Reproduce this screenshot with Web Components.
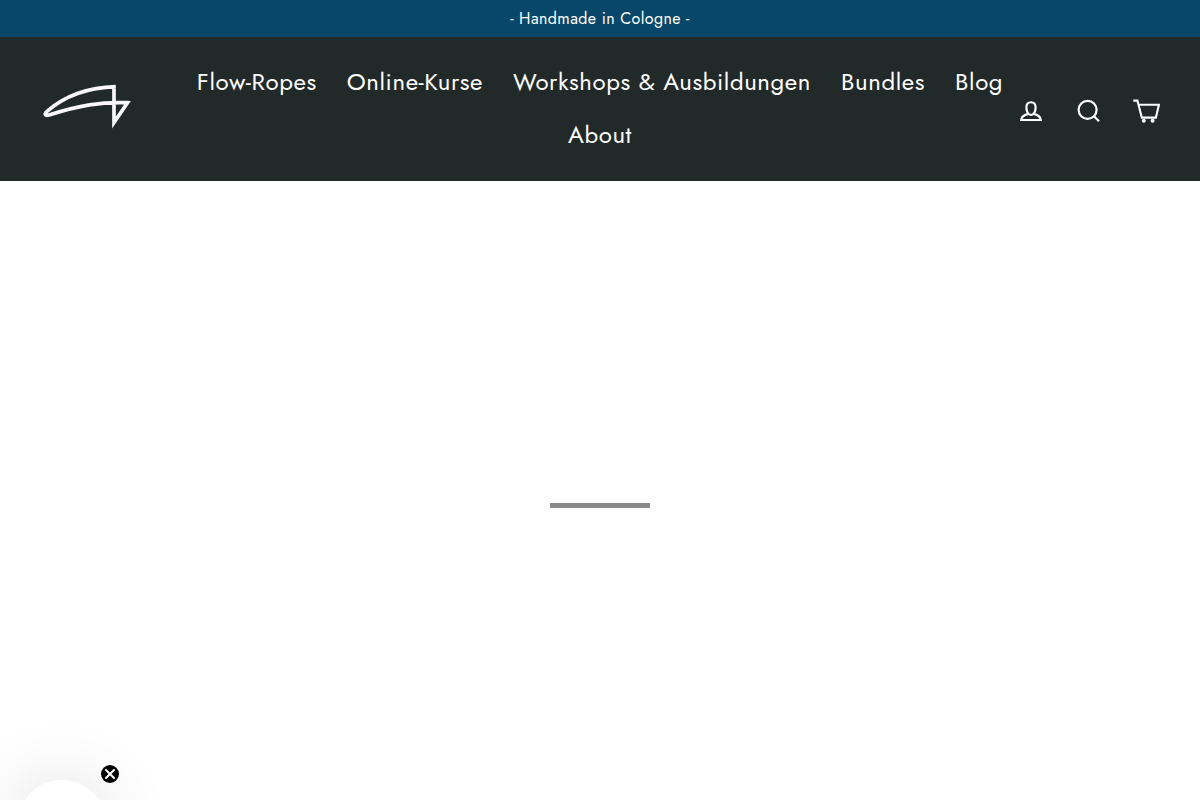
<!DOCTYPE html>
<html lang="de">
<head>
<meta charset="utf-8">
<meta name="viewport" content="width=device-width, initial-scale=1">
<title>Flow-Ropes</title>
<style>
  html, body { margin: 0; }
  body { background: #fff; font-family: Jost, Lato, sans-serif; color: #fff; --tracking: 0.025em; }
</style>
</head>
<body>
<shop-page>
  <announcement-bar slot="top">- Handmade in Cologne -</announcement-bar>
  <site-header slot="top">
    <nav-link href="#flow-ropes">Flow-Ropes</nav-link>
    <nav-link href="#online-kurse">Online-Kurse</nav-link>
    <nav-link href="#workshops">Workshops &amp; Ausbildungen</nav-link>
    <nav-link href="#bundles">Bundles</nav-link>
    <nav-link href="#blog">Blog</nav-link>
    <nav-link href="#about">About</nav-link>
  </site-header>
  <loading-bar></loading-bar>
</shop-page>
<promo-teaser></promo-teaser>

<script>
  const define = (name, html, setup) => {
    const template = document.createElement('template');
    template.innerHTML = html;
    customElements.define(name, class extends HTMLElement {
      constructor() {
        super();
        this.attachShadow({ mode: 'open' }).append(template.content.cloneNode(true));
      }
      connectedCallback() { if (setup) setup(this, this.shadowRoot); }
    });
  };

  define('shop-page', `
    <style>
      :host { display: flex; flex-direction: column; min-height: 100vh; }
      main { flex: 1; display: flex; align-items: center; justify-content: center; padding-top: 30px; }
    </style>
    <slot name="top"></slot>
    <main><slot></slot></main>`);

  define('announcement-bar', `
    <style>
      :host { display: block; background: #084769; text-align: center; }
      p { margin: 0; padding: 7px 40px 6px; font-size: 16px; line-height: 24px; letter-spacing: var(--tracking); }
    </style>
    <p><slot></slot></p>`);

  define('nav-link', `
    <style>
      :host { display: block; }
      a { display: block; padding: 0 15px; color: inherit; text-decoration: none;
          font-size: 24px; line-height: 53px; letter-spacing: var(--tracking); white-space: nowrap; }
    </style>
    <a><slot></slot></a>`,
    (host, root) => { root.querySelector('a').href = host.getAttribute('href'); });

  define('site-header', `
    <style>
      :host { display: block; background: #222a29; }
      header { display: grid; grid-template-columns: 144px 1fr 144px; align-items: center; padding: 18px 40px 20px; }
      .logo { display: block; width: 100px; height: 60px; }
      nav { display: flex; flex-wrap: wrap; justify-content: center; margin: 0 -8px; }
      .tools { display: flex; gap: 30px; justify-content: flex-end; padding-top: 6px; }
      .tools a { display: block; width: 28px; height: 28px; color: inherit; }
      svg { display: block; width: 100%; height: 100%; fill: none; stroke: currentColor; }
      .dot { fill: currentColor; stroke: none; }
    </style>
    <header>
      <a class="logo" href="#home" aria-label="Startseite">
        <svg viewBox="0 0 100 60" color="#f7f7fc" stroke-width="3.7" stroke-miterlimit="8">
          <path d="M74 8.600V44.500L87.500 24.700C61 23.700 39 27.500 9 37C5 38.200 4 36 7 33.300C24 18.500 45 9.500 75.800 8.600"/>
        </svg>
      </a>
      <nav aria-label="Hauptmenü"><slot></slot></nav>
      <div class="tools">
        <a href="#account" aria-label="Einloggen">
          <svg viewBox="0 0 28 28" stroke-width="2.100">
            <path d="M12.800 17.200C11.200 15.700 10.400 13.500 10.400 10.500C10.400 6.800 12.200 5.200 15 5.200S19.600 6.800 19.600 10.500C19.600 13.500 18.800 15.700 17.200 17.200"/>
            <path d="M12.600 16.900C8.500 17.800 5.500 19 5.200 23H24.800C24.500 19 21.500 17.800 17.400 16.900C16.200 18.200 13.800 18.200 12.600 16.900"/>
          </svg>
        </a>
        <a href="#search" aria-label="Suche">
          <svg viewBox="0 0 28 28" stroke-width="2.200">
            <circle cx="13.600" cy="12.800" r="9"/><path d="M20 19.200L25 24.200"/>
          </svg>
        </a>
        <a href="#cart" aria-label="Einkaufswagen">
          <svg viewBox="0 0 28 28" stroke-width="2.100" overflow="visible">
            <path d="M1.300 3.600H5.400L9.800 20.600H23.900L26.900 7.800H6.600"/>
            <circle class="dot" cx="11.800" cy="23.800" r="2"/><circle class="dot" cx="20.600" cy="23.800" r="2"/>
          </svg>
        </a>
      </div>
    </header>`);

  define('loading-bar', `
    <style>
      :host { display: block; width: 100px; height: 5px; background: #8b8989; }
    </style>`,
    host => { host.setAttribute('role', 'progressbar'); host.setAttribute('aria-label', 'Laden'); });

  define('promo-teaser', `
    <style>
      :host { display: block; position: fixed; left: 17px; bottom: -70px; width: 90px; height: 90px; }
      button { border: 0; margin: 0; padding: 0; border-radius: 50%; cursor: pointer; }
      .open { display: block; width: 100%; height: 100%; background: #fff; box-shadow: 0 0 70px rgba(0, 0, 0, .13); }
      .close { position: absolute; top: -15px; right: -12px; width: 18px; height: 18px; background: #000; color: #fff; }
      svg { display: block; fill: none; stroke: currentColor; }
    </style>
    <button class="open" type="button" aria-label="Angebot öffnen"></button>
    <button class="close" type="button" aria-label="Angebot schließen">
      <svg width="18" height="18" viewBox="0 0 18 18" stroke-width="2" stroke-linecap="round"><path d="M5 5L13 13M13 5L5 13"/></svg>
    </button>`,
    (host, root) => { root.querySelector('.close').addEventListener('click', () => host.remove()); });
</script>
</body>
</html>
